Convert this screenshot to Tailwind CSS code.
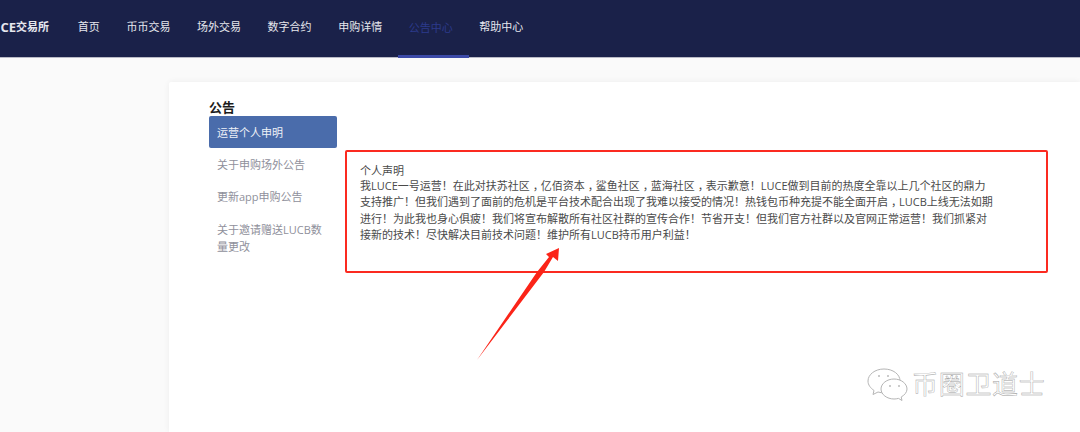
<!DOCTYPE html>
<html lang="zh">
<head>
<meta charset="utf-8">
<script src="https://cdn.jsdelivr.net/npm/@tailwindcss/browser@4"></script>
</head>
<body class="m-0 h-[432px] w-[1080px] overflow-hidden bg-[#fafafa] font-['Open_Sans','Noto_Sans_CJK_SC',sans-serif] relative">
  <header class="flex h-[58px] items-stretch bg-[#1a2149] border-b border-b-[#b9bac6] text-[11px] text-[#e6e7ee]">
    <div class="flex w-[64.5px] items-center justify-end pr-[15.5px] pb-[2px] font-bold whitespace-nowrap"><span class="text-[13px]">CE</span>交易所</div>
    <nav class="flex items-stretch">
      <a class="flex items-center px-[13.3px] pb-[2px]">首页</a>
      <a class="flex items-center px-[13.3px] pb-[2px]">币币交易</a>
      <a class="flex items-center px-[13.3px] pb-[2px]">场外交易</a>
      <a class="flex items-center px-[13.3px] pb-[2px]">数字合约</a>
      <a class="flex items-center px-[13.3px] pb-[2px]">申购详情</a>
      <a class="flex items-center ml-[2.5px] -mr-[2.5px] pl-[10.8px] pr-[15.8px] border-b-[3px] pt-px border-b-[#3c4aa8] text-[#2c3a8c] -mb-px">公告中心</a>
      <a class="flex items-center px-[13.3px] pb-[2px]">帮助中心</a>
    </nav>
  </header>
  <main class="pl-[169px] pt-[24px]">
    <section class="flex h-[350px] bg-white rounded-tl-[2px] shadow-[0_0_6px_rgba(0,0,0,0.06)] pl-[40px]">
      <aside class="w-[128px] shrink-0 pt-[17px]">
        <h2 class="m-0 text-[13px] leading-[17px] font-bold text-[#1c1c1c]">公告</h2>
        <ul class="text-[11px] leading-[17px] text-[#8f909b]">
          <li class="flex h-[32px] items-center rounded-[2px] bg-[#4a6cab] px-[8px] text-[#eef1f7]">运营个人申明</li>
          <li class="flex h-[32px] items-center px-[8px]">关于申购场外公告</li>
          <li class="flex h-[32px] items-center px-[8px]">更新app申购公告</li>
          <li class="px-[8px] pt-[9px]">关于邀请赠送LUCB数<br>量更改</li>
        </ul>
      </aside>
      <div class="ml-[8px] mt-[68px] h-[123px] w-[703px] shrink-0 rounded-[2px] border-2 border-[#fb2a20] px-[13px] pt-[10.5px] text-[11px] leading-[16.5px] text-[#4a4a4a] whitespace-nowrap">
        <p class="leading-[15px]">个人声明</p>
        <p>我LUCE一号运营<span class="leading-none font-['Noto_Sans_CJK_TC']">！</span>在此对扶苏社区<span class="ml-[3px] tracking-[-3px]">，</span>亿佰资本<span class="ml-[3px] tracking-[-3px]">，</span>鲨鱼社区<span class="ml-[3px] tracking-[-3px]">，</span>蓝海社区<span class="ml-[3px] tracking-[-3px]">，</span>表示歉意<span class="leading-none font-['Noto_Sans_CJK_TC']">！</span>LUCE做到目前的热度全靠以上几个社区的鼎力<br>支持推广<span class="leading-none font-['Noto_Sans_CJK_TC']">！</span>但我们遇到了面前的危机是平台技术配合出现了我难以接受的情况<span class="leading-none font-['Noto_Sans_CJK_TC']">！</span>热钱包币种充提不能全面开启<span class="ml-[3px] tracking-[-3px]">，</span>LUCB上线无法如期<br>进行<span class="leading-none font-['Noto_Sans_CJK_TC']">！</span>为此我也身心俱疲<span class="leading-none font-['Noto_Sans_CJK_TC']">！</span>我们将宣布解散所有社区社群的宣传合作<span class="leading-none font-['Noto_Sans_CJK_TC']">！</span>节省开支<span class="leading-none font-['Noto_Sans_CJK_TC']">！</span>但我们官方社群以及官网正常运营<span class="leading-none font-['Noto_Sans_CJK_TC']">！</span>我们抓紧对<br>接新的技术<span class="leading-none font-['Noto_Sans_CJK_TC']">！</span>尽快解决目前技术问题<span class="leading-none font-['Noto_Sans_CJK_TC']">！</span>维护所有LUCB持币用户利益<span class="leading-none font-['Noto_Sans_CJK_TC']">！</span></p>
      </div>
    </section>
  </main>
  <svg class="absolute left-[470px] top-[240px]" width="100" height="125" viewBox="470 240 100 125">
    <polygon points="477,360 537,272 549,257 546,254 559,248 558,261 553,257 544,272" fill="#fb2418"/>
  </svg>
  <div class="absolute left-[864px] top-[367px] flex items-center gap-[2px]">
    <svg width="46" height="34" viewBox="0 0 46 34" fill="#fff" stroke="#b5b5b5" stroke-width="1">
      <path d="M20 2C11 2 4 7.500 4 14c0 4 2.500 7 6 9.500l-1 4 5-2.500c2 .6 4 .8 6 .8 9 0 16-5.500 16-12S29 2 20 2z"/>
      <path d="M30 12c-7 0-13 4.500-13 10s6 10 13 10c1.500 0 3-.2 4.500-.6L38 33.500l-.8-3.500c3.500-2 5.800-4.800 5.800-8 0-5.500-6-10-13-10z"/>
      <circle cx="15" cy="9" r="1" fill="#bbb" stroke="none"/>
      <circle cx="24" cy="9" r="1" fill="#bbb" stroke="none"/>
      <circle cx="26" cy="19" r="1" fill="#bbb" stroke="none"/>
      <circle cx="35" cy="19" r="1" fill="#bbb" stroke="none"/>
    </svg>
    <span class="text-[26px] leading-[30px] tracking-[0.7px] text-white [-webkit-text-stroke:0.4px_#9a9a9a] whitespace-nowrap">币圈卫道士</span>
  </div>
</body>
</html>
